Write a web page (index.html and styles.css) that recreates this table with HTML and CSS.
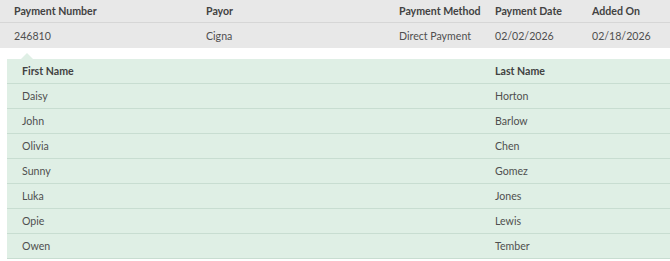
FILE: index.html
```html
<!DOCTYPE html>
<html>
<head>
<meta charset="utf-8">
<link rel="stylesheet" href="styles.css">
</head>
<body>
<div class="payments">
  <div class="prow phead">
    <div>Payment Number</div><div>Payor</div><div>Payment Method</div><div>Payment Date</div><div>Added On</div>
  </div>
  <div class="prow pdata">
    <div>246810</div><div>Cigna</div><div>Direct Payment</div><div>02/02/2026</div><div>02/18/2026</div>
  </div>
</div>
<div class="detail">
  <div class="notch"></div>
  <div class="panel">
    <div class="nrow nhead"><div>First Name</div><div>Last Name</div></div>
    <div class="nrow"><div>Daisy</div><div>Horton</div></div>
    <div class="nrow"><div>John</div><div>Barlow</div></div>
    <div class="nrow"><div>Olivia</div><div>Chen</div></div>
    <div class="nrow"><div>Sunny</div><div>Gomez</div></div>
    <div class="nrow"><div>Luka</div><div>Jones</div></div>
    <div class="nrow"><div>Opie</div><div>Lewis</div></div>
    <div class="nrow"><div>Owen</div><div>Tember</div></div>
  </div>
</div>
</body>
</html>
```

FILE: styles.css
```css
html, body {
  margin: 0;
  padding: 0;
  background: #ffffff;
}
body {
  font-family: Lato, "Open Sans", sans-serif;
  font-size: 10.6px;
  color: #4f4f4f;
}
.payments {
  background: #e8e8e8;
}
.prow {
  display: grid;
  grid-template-columns: 192px 193px 96px 97px 1fr;
  padding-left: 14px;
  align-items: center;
}
.phead {
  height: 22px;
  border-bottom: 1px solid #d6d6d6;
  font-weight: 700;
  color: #424242;
}
.pdata {
  height: 25px;
}
.detail {
  position: relative;
  padding: 11px 0 0 7px;
}
.notch {
  position: absolute;
  left: 21px;
  top: 5px;
  width: 0;
  height: 0;
  border-left: 6px solid transparent;
  border-right: 6px solid transparent;
  border-bottom: 6px solid #dfefe5;
}
.panel {
  background: #dfefe5;
}
.nrow {
  display: grid;
  grid-template-columns: 473px 1fr;
  height: 24px;
  border-bottom: 1px solid #c8ddd1;
  align-items: center;
}
.nrow > div {
  padding-left: 15px;
}
.nhead {
  font-weight: 700;
  color: #424242;
}
```
